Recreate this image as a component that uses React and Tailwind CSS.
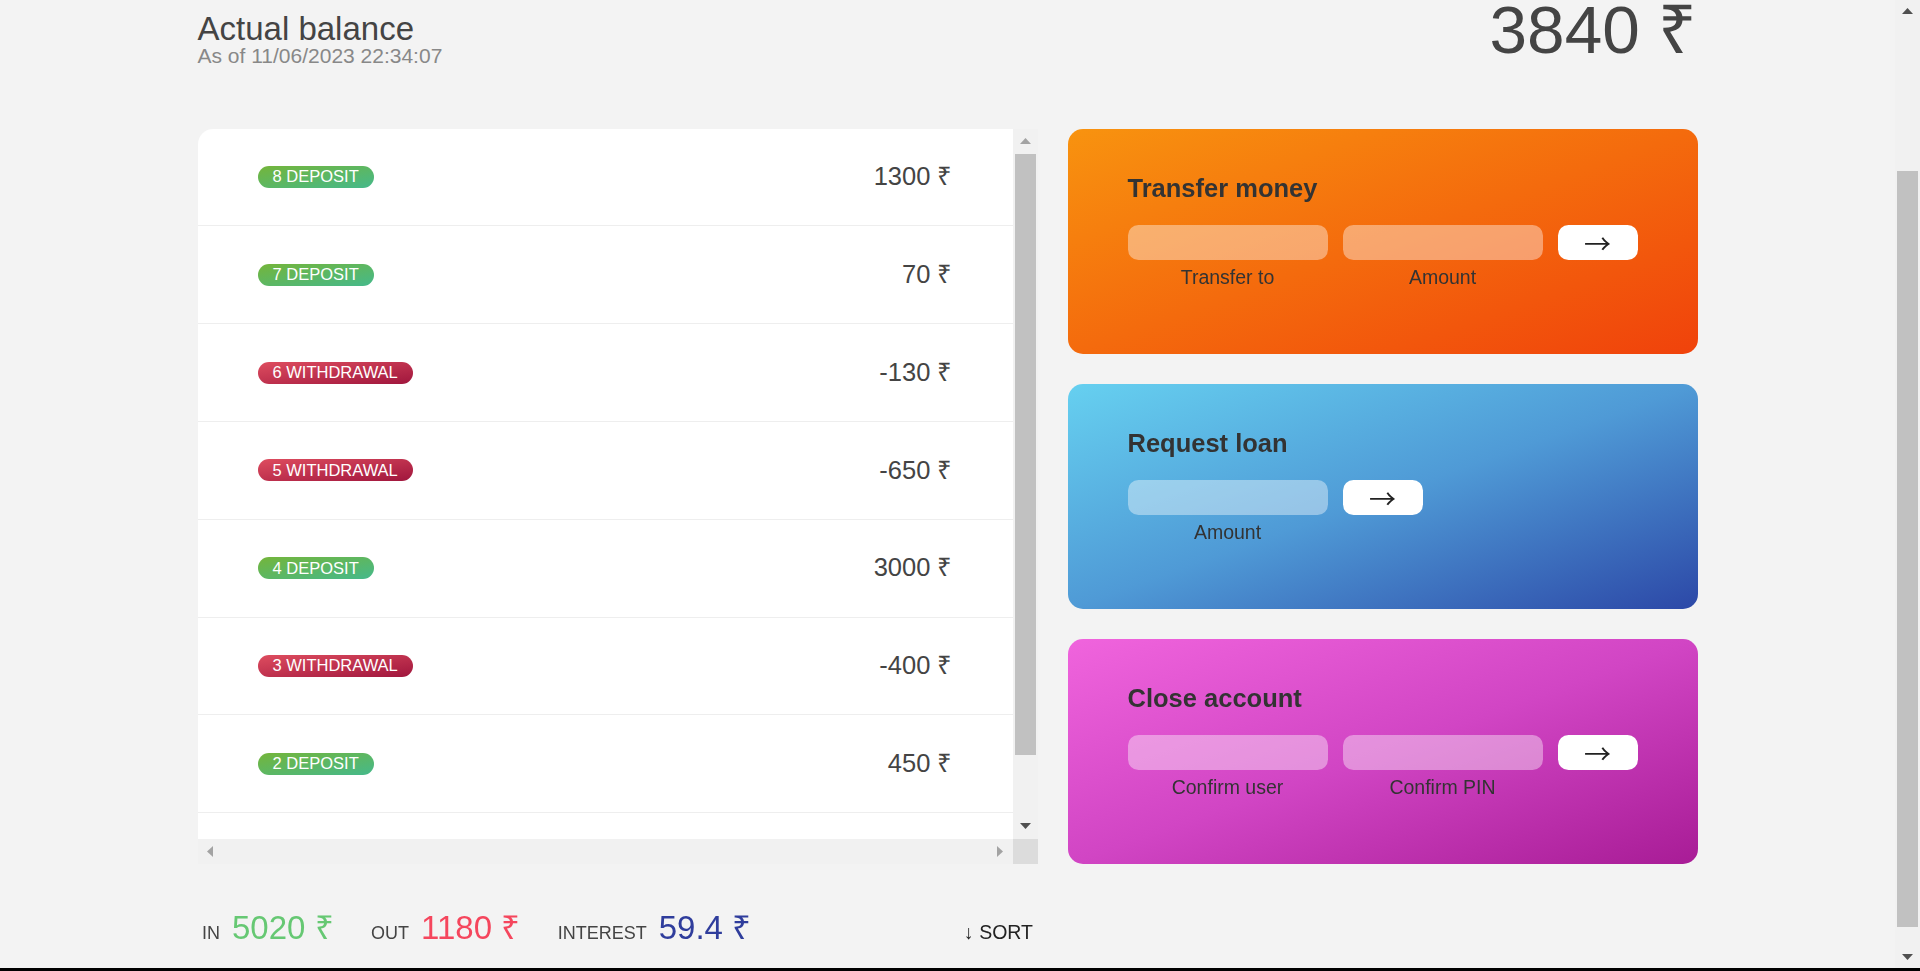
import { useLayoutEffect, useRef } from "react";

const movements = [
  { n: 8, type: "deposit", v: 1300 },
  { n: 7, type: "deposit", v: 70 },
  { n: 6, type: "withdrawal", v: -130 },
  { n: 5, type: "withdrawal", v: -650 },
  { n: 4, type: "deposit", v: 3000 },
  { n: 3, type: "withdrawal", v: -400 },
  { n: 2, type: "deposit", v: 450 },
  { n: 1, type: "deposit", v: 200 },
];

function Arrow({ dir, color }) {
  const vertical = dir === "up" || dir === "down";
  const d = {
    up: "M0 6 L5.5 0 L11 6 Z",
    down: "M0 0 L11 0 L5.5 6 Z",
    left: "M6 0 L6 11 L0 5.5 Z",
    right: "M0 0 L6 5.5 L0 11 Z",
  }[dir];
  return (
    <svg
      width={vertical ? 11 : 6}
      height={vertical ? 6 : 11}
      viewBox={vertical ? "0 0 11 6" : "0 0 6 11"}
      aria-hidden="true"
    >
      <path d={d} fill={color} />
    </svg>
  );
}

function MovementRow({ m }) {
  const dep = m.type === "deposit";
  return (
    <div className="flex items-center border-b border-[#eee] px-[60px] py-[33.75px]">
      <div
        className={
          dep
            ? "mr-[30px] rounded-full bg-[linear-gradient(to_top_left,#45b98b,#74b53a)] px-[15px] py-[1.5px] text-[16.5px] font-medium uppercase text-white"
            : "mr-[30px] rounded-full bg-[linear-gradient(to_top_left,#a0163d,#de4d5f)] px-[15px] py-[1.5px] text-[16.5px] font-medium uppercase text-white"
        }
      >
        {m.n} {m.type}
      </div>
      <div className="ml-auto text-[25.5px]">{m.v} ₹</div>
    </div>
  );
}

const inputCls =
  "w-full rounded-[10.5px] bg-white/40 px-[15px] py-[4.5px] text-center text-[22.5px] text-[#333] outline-none";
const btnCls =
  "rounded-[10.5px] bg-white font-['Noto_Sans_CJK_JP','DejaVu_Sans',sans-serif] text-[27px] leading-none text-[#222] cursor-pointer";
const labelCls = "text-center text-[19.5px] text-[#333]";

export default function App() {
  const pageRef = useRef(null);
  useLayoutEffect(() => {
    if (pageRef.current) pageRef.current.scrollTop = 191;
  }, []);

  return (
    <div className="flex h-screen flex-col bg-[#f3f3f3] font-['Liberation_Sans',Arial,sans-serif] leading-[1.149] text-[#444]">
      <div className="flex min-h-0 flex-1">
        {/* page */}
        <div ref={pageRef} className="min-w-0 flex-1 overflow-y-scroll [scrollbar-width:none]">
          <div className="px-[30px] pb-[45px] pt-[30px]">
            <nav className="flex h-[92px] items-center justify-between px-[30px]">
              <p className="text-[28.5px] font-medium">Good Evening, Jonas!</p>
              <svg width="76" height="76" viewBox="0 0 80 80" aria-hidden="true">
                <circle cx="40" cy="40" r="36" fill="#66c873" />
                <path d="M22 48 L40 22 L58 48 Z" fill="#fff" />
              </svg>
              <form className="flex items-center gap-[15px]">
                <input
                  placeholder="user"
                  className="w-[180px] rounded-full border border-white bg-white px-[30px] py-[7.5px] text-center text-[24px]"
                />
                <input
                  placeholder="PIN"
                  className="w-[180px] rounded-full border border-white bg-white px-[30px] py-[7.5px] text-center text-[24px]"
                />
                <button type="button" className="text-[33px] text-[#777]">
                  →
                </button>
              </form>
            </nav>

            <main className="mx-auto mt-[60px] grid max-w-[1500px] grid-cols-[4fr_3fr] grid-rows-[auto_repeat(3,225px)_auto] gap-[30px]">
              <div className="col-span-2 mb-[30px] flex items-end justify-between">
                <div>
                  <p className="mb-[-3px] text-[33px] font-medium">Actual balance</p>
                  <p className="text-[21px] text-[#888]">As of 11/06/2023 22:34:07</p>
                </div>
                <p className="text-[67.5px] font-normal">3840 ₹</p>
              </div>

              {/* movements with classic scrollbars */}
              <div className="col-start-1 row-span-3 row-start-2 grid min-h-0 grid-cols-[minmax(0,1fr)_25px] grid-rows-[minmax(0,1fr)_25px]">
                <div className="min-h-0 overflow-y-auto rounded-tl-[15px] bg-white [scrollbar-width:none]">
                  {movements.map((m) => (
                    <MovementRow key={m.n} m={m} />
                  ))}
                </div>
                <div className="flex flex-col bg-[#f1f1f1]" aria-hidden="true">
                  <div className="flex h-[25px] items-center justify-center">
                    <Arrow dir="up" color="#a3a3a3" />
                  </div>
                  <div className="min-h-0 flex-1">
                    <div className="mx-[2px] h-[601px] bg-[#c1c1c1]" />
                  </div>
                  <div className="flex h-[25px] items-center justify-center">
                    <Arrow dir="down" color="#505050" />
                  </div>
                </div>
                <div className="flex items-center justify-between bg-[#f1f1f1]" aria-hidden="true">
                  <div className="flex w-[25px] items-center justify-center">
                    <Arrow dir="left" color="#a3a3a3" />
                  </div>
                  <div className="flex w-[25px] items-center justify-center">
                    <Arrow dir="right" color="#a3a3a3" />
                  </div>
                </div>
                <div className="bg-[#dcdcdc]" />
              </div>

              <div className="col-start-1 row-start-5 mt-[15px] flex items-baseline px-[4.5px]">
                <p className="mr-[12px] text-[18px] font-medium uppercase">In</p>
                <p className="mr-[37.5px] text-[33px] text-[#66c873]">5020 ₹</p>
                <p className="mr-[12px] text-[18px] font-medium uppercase">Out</p>
                <p className="mr-[37.5px] text-[33px] text-[#f5465d]">1180 ₹</p>
                <p className="mr-[12px] text-[18px] font-medium uppercase">Interest</p>
                <p className="mr-[37.5px] text-[33px] text-[#2f3d9c]">59.4 ₹</p>
                <button type="button" className="ml-auto cursor-pointer text-[19.5px] font-medium text-[#222]">
                  ↓ SORT
                </button>
              </div>

              <div className="col-start-2 row-start-2 rounded-[15px] bg-[linear-gradient(to_top_left,#f0420b,#f8930f)] px-[60px] py-[45px] text-[#333]">
                <h2 className="mb-[22.5px] text-[25.5px] font-semibold text-[#333]">Transfer money</h2>
                <form className="grid grid-cols-[2.5fr_2.5fr_1fr] gap-x-[15px] gap-y-[6px]">
                  <input type="text" className={inputCls} />
                  <input type="number" className={inputCls} />
                  <button type="button" className={btnCls}>
                    →
                  </button>
                  <label className={labelCls}>Transfer to</label>
                  <label className={labelCls}>Amount</label>
                </form>
              </div>

              <div className="col-start-2 row-start-3 rounded-[15px] bg-[linear-gradient(to_top_left,#2c48a7,#4f9ad6,#66d0f0)] px-[60px] py-[45px] text-[#333]">
                <h2 className="mb-[22.5px] text-[25.5px] font-semibold text-[#333]">Request loan</h2>
                <form className="grid grid-cols-[2.5fr_1fr_2.5fr] gap-x-[15px] gap-y-[6px]">
                  <input type="number" className={inputCls} />
                  <button type="button" className={btnCls}>
                    →
                  </button>
                  <label className={"col-start-1 row-start-2 " + labelCls}>Amount</label>
                </form>
              </div>

              <div className="col-start-2 row-start-4 rounded-[15px] bg-[linear-gradient(to_top_left,#a81c96,#d145c4,#f064dd)] px-[60px] py-[45px] text-[#333]">
                <h2 className="mb-[22.5px] text-[25.5px] font-semibold text-[#333]">Close account</h2>
                <form className="grid grid-cols-[2.5fr_2.5fr_1fr] gap-x-[15px] gap-y-[6px]">
                  <input type="text" className={inputCls} />
                  <input type="password" maxLength={6} className={inputCls} />
                  <button type="button" className={btnCls}>
                    →
                  </button>
                  <label className={labelCls}>Confirm user</label>
                  <label className={labelCls}>Confirm PIN</label>
                </form>
              </div>
            </main>
          </div>
        </div>

        {/* page scrollbar */}
        <div className="flex w-[25px] shrink-0 flex-col bg-[#f1f1f1]" aria-hidden="true">
          <div className="flex h-[22px] items-center justify-center">
            <Arrow dir="up" color="#505050" />
          </div>
          <div className="min-h-0 flex-1">
            <div className="h-[149px]" />
            <div className="mx-[2px] h-[756px] bg-[#c1c1c1]" />
          </div>
          <div className="flex h-[22px] items-center justify-center">
            <Arrow dir="down" color="#505050" />
          </div>
        </div>
      </div>
      <div className="h-[3px] shrink-0 bg-black" />
    </div>
  );
}
